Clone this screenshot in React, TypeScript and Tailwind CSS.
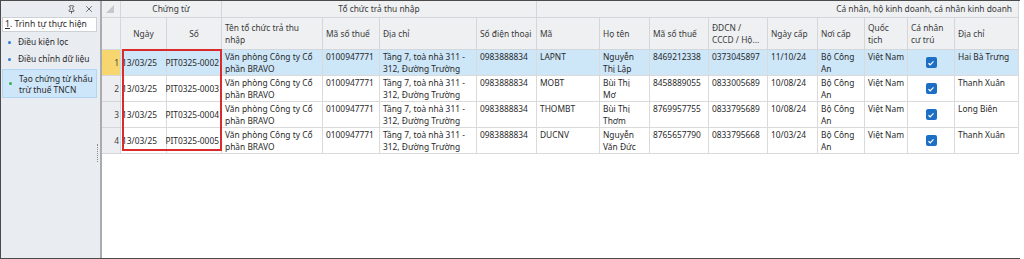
import React from "react";
import { Pin, X } from "lucide-react";

const font = { fontFamily: '"Noto Sans", "Open Sans", sans-serif' };

type Row = {
  no: number;
  ngay: string;
  so: string;
  ten: string[];
  mst: string;
  diaChi: string[];
  sdt: string;
  ma: string;
  hoTen: string[];
  mstCn: string;
  cccd: string;
  ngayCap: string;
  noiCap: string[];
  quocTich: string;
  diaChiCn: string;
};

const rows: Row[] = [
  { no: 1, ngay: "13/03/25", so: "PIT0325-0002", ten: ["Văn phòng Công ty Cổ", "phần BRAVO"], mst: "0100947771", diaChi: ["Tầng 7, toà nhà 311 -", "312, Đường Trường"], sdt: "0983888834", ma: "LAPNT", hoTen: ["Nguyễn", "Thị Lập"], mstCn: "8469212338", cccd: "0373045897", ngayCap: "11/10/24", noiCap: ["Bộ Công", "An"], quocTich: "Việt Nam", diaChiCn: "Hai Bà Trưng" },
  { no: 2, ngay: "13/03/25", so: "PIT0325-0003", ten: ["Văn phòng Công ty Cổ", "phần BRAVO"], mst: "0100947771", diaChi: ["Tầng 7, toà nhà 311 -", "312, Đường Trường"], sdt: "0983888834", ma: "MOBT", hoTen: ["Bùi Thị", "Mơ"], mstCn: "8458889055", cccd: "0833005689", ngayCap: "10/08/24", noiCap: ["Bộ Công", "An"], quocTich: "Việt Nam", diaChiCn: "Thanh Xuân" },
  { no: 3, ngay: "13/03/25", so: "PIT0325-0004", ten: ["Văn phòng Công ty Cổ", "phần BRAVO"], mst: "0100947771", diaChi: ["Tầng 7, toà nhà 311 -", "312, Đường Trường"], sdt: "0983888834", ma: "THOMBT", hoTen: ["Bùi Thị", "Thơm"], mstCn: "8769957755", cccd: "0833795689", ngayCap: "10/08/24", noiCap: ["Bộ Công", "An"], quocTich: "Việt Nam", diaChiCn: "Long Biên" },
  { no: 4, ngay: "13/03/25", so: "PIT0325-0005", ten: ["Văn phòng Công ty Cổ", "phần BRAVO"], mst: "0100947771", diaChi: ["Tầng 7, toà nhà 311 -", "312, Đường Trường"], sdt: "0983888834", ma: "DUCNV", hoTen: ["Nguyễn", "Văn Đức"], mstCn: "8765657790", cccd: "0833795668", ngayCap: "10/03/24", noiCap: ["Bộ Công", "An"], quocTich: "Việt Nam", diaChiCn: "Thanh Xuân" },
];

function Lines({ lines }: { lines: string[] }) {
  return (
    <>
      {lines.map((l, i) => (
        <div key={i} className="whitespace-nowrap">{l}</div>
      ))}
    </>
  );
}

function Check() {
  return (
    <div className="w-[11px] h-[11px] rounded-[2px] bg-[#1c6fc5] flex items-center justify-center">
      <svg width="8" height="8" viewBox="0 0 8 8">
        <path d="M1.5 4.2 L3.2 5.8 L6.5 2.3" stroke="white" strokeWidth="1.2" fill="none" />
      </svg>
    </div>
  );
}

const hCell = "border-r border-b border-[#d3d6da] bg-[#eef0f2] text-[#3a3a3a] flex items-center overflow-hidden whitespace-nowrap";
const dCell = "border-r border-b border-[#dadada] text-[#2a2a2a] px-[3px] pt-[1px] overflow-hidden";

function SidePanel() {
  return (
    <div className="relative w-[101px] shrink-0 bg-[#e9ecf1] border-r-2 border-[#a9abae] flex flex-col text-[8.4px] text-[#2b2b2b] whitespace-nowrap">
      <div className="h-[16px] flex items-center justify-end gap-[8px] pr-[6px] text-[#555]">
        <Pin size={9} strokeWidth={2.4} />
        <X size={10} strokeWidth={2} />
      </div>
      <div className="ml-[1px] mr-[3px] h-[15px] bg-white border border-[#cdd0d4] flex items-center pl-[2px] text-[8.6px] text-[#2a2a2a]">
        <span><span className="underline">1</span>. Trình tự thực hiện</span>
      </div>
      <div className="flex items-center gap-[7px] pl-[7px] h-[17px] mt-[2px]">
        <span className="w-[3px] h-[3px] rounded-full bg-[#2e7bd8]" />
        <span>Điều kiện lọc</span>
      </div>
      <div className="flex items-center gap-[7px] pl-[7px] h-[17px]">
        <span className="w-[3px] h-[3px] rounded-full bg-[#2e7bd8]" />
        <span>Điều chỉnh dữ liệu</span>
      </div>
      <div className="ml-[1px] mr-[3px] mt-[1px] h-[29px] bg-[#cde6f9] border border-[#b2d6f2] flex items-center gap-[7px] pl-[6px]">
        <span className="w-[3px] h-[3px] rounded-full bg-[#37b04a]" />
        <div className="leading-[11px]">
          <div>Tạo chứng từ khấu</div>
          <div>trừ thuế TNCN</div>
        </div>
      </div>
      <div className="absolute left-[96px] top-[143px] h-[18px] border-l border-dotted border-[#8a8a8a]" />
    </div>
  );
}

function Grid() {
  const cols = "grid grid-cols-[19px_46px_55px_101px_57px_97px_60px_63px_50px_59px_59px_50px_47px_43px_47px_64px] grid-rows-[17px_32px_26px_26px_26px_26px]";
  return (
    <div className="relative flex-1 bg-white">
      <div className={`${cols} text-[8.4px] leading-[11.5px]`}>
        {/* header row 1 */}
        <div className={`${hCell} justify-center`}>
          <svg width="8" height="8" viewBox="0 0 8 8" className="ml-[-2px] mt-[-1px]">
            <polygon points="8,0 8,8 0,8" fill="#c4c7cb" />
          </svg>
        </div>
        <div className={`${hCell} col-span-2 justify-center`}>Chứng từ</div>
        <div className={`${hCell} col-span-4 justify-center`}>Tổ chức trả thu nhập</div>
        <div className={`${hCell} col-span-9 justify-end pr-[6px]`}>Cá nhân, hộ kinh doanh, cá nhân kinh doanh</div>
        {/* header row 2 */}
        <div className={hCell} />
        <div className={`${hCell} justify-center`}>Ngày</div>
        <div className={`${hCell} justify-center`}>Số</div>
        <div className={`${hCell} pl-[3px]`}><div><div>Tên tổ chức trả thu</div><div>nhập</div></div></div>
        <div className={`${hCell} pl-[3px]`}>Mã số thuế</div>
        <div className={`${hCell} pl-[3px]`}>Địa chỉ</div>
        <div className={`${hCell} pl-[3px]`}>Số điện thoại</div>
        <div className={`${hCell} pl-[3px]`}>Mã</div>
        <div className={`${hCell} pl-[3px]`}>Họ tên</div>
        <div className={`${hCell} pl-[3px]`}>Mã số thuế</div>
        <div className={`${hCell} pl-[3px]`}><div><div>ĐDCN /</div><div>CCCD / Hộ...</div></div></div>
        <div className={`${hCell} pl-[3px]`}>Ngày cấp</div>
        <div className={`${hCell} pl-[3px]`}>Nơi cấp</div>
        <div className={`${hCell} pl-[3px]`}><div><div>Quốc</div><div>tịch</div></div></div>
        <div className={`${hCell} pl-[3px]`}><div><div>Cá nhân</div><div>cư trú</div></div></div>
        <div className={`${hCell} pl-[3px]`}>Địa chỉ</div>
        {/* data rows */}
        {rows.map((r) => {
          const sel = r.no === 1;
          const bg = sel ? "bg-[#cde6f8]" : "bg-white";
          return (
            <React.Fragment key={r.no}>
              <div className={`border-r border-b border-[#d3d6da] ${sel ? "bg-[#f7d66f]" : "bg-[#eceef1]"} text-[#444] flex items-center justify-end pr-[1px]`}>{r.no}</div>
              <div className={`border-r border-b border-[#dadada] ${bg} text-[#2a2a2a] flex items-center pl-[1px]`}>{r.ngay}</div>
              <div className={`border-r border-b border-[#dadada] ${bg} text-[#2a2a2a] flex items-center justify-end pr-[2px] whitespace-nowrap`}>{r.so}</div>
              <div className={`${dCell} ${bg}`}><Lines lines={r.ten} /></div>
              <div className={`${dCell} ${bg}`}>{r.mst}</div>
              <div className={`${dCell} ${bg}`}><Lines lines={r.diaChi} /></div>
              <div className={`${dCell} ${bg}`}>{r.sdt}</div>
              <div className={`${dCell} ${bg}`}>{r.ma}</div>
              <div className={`${dCell} ${bg}`}><Lines lines={r.hoTen} /></div>
              <div className={`${dCell} ${bg}`}>{r.mstCn}</div>
              <div className={`${dCell} ${bg}`}>{r.cccd}</div>
              <div className={`${dCell} ${bg}`}>{r.ngayCap}</div>
              <div className={`${dCell} ${bg}`}><Lines lines={r.noiCap} /></div>
              <div className={`${dCell} ${bg} whitespace-nowrap`}>{r.quocTich}</div>
              <div className={`border-r border-b border-[#dadada] ${bg} flex items-center justify-center`}><Check /></div>
              <div className={`${dCell} ${bg} whitespace-nowrap`}>{r.diaChiCn}</div>
            </React.Fragment>
          );
        })}
      </div>
      {/* highlight annotation */}
      <div className="absolute left-[20px] top-[48px] w-[100px] h-[102px] border-2 border-[#db2a2c] pointer-events-none" />
    </div>
  );
}

export default function App() {
  return (
    <div style={font} className="w-[1024px] h-[259px] bg-white">
      <div className="w-[1020px] h-[259px] flex border-t border-l border-b border-[#4b4b4b] overflow-hidden">
        <SidePanel />
        <Grid />
      </div>
    </div>
  );
}
